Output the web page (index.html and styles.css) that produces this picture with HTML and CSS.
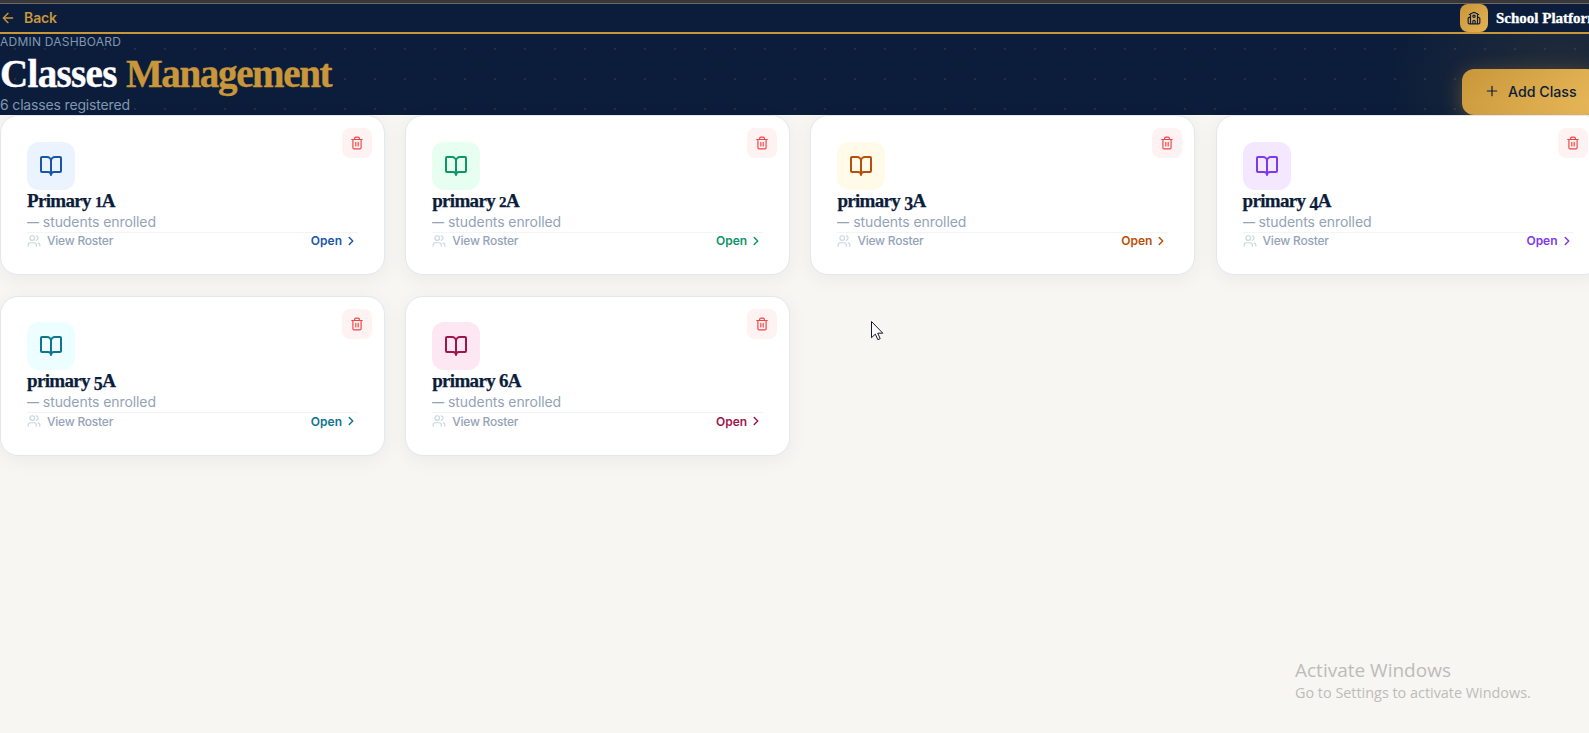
FILE: index.html
```html
<!DOCTYPE html>
<html lang="en">
<head>
<meta charset="utf-8">
<title>Classes Management</title>
<link rel="stylesheet" href="styles.css">
</head>
<body>
<svg class="sprite" aria-hidden="true">
  <symbol id="book" viewBox="0 0 24 24"><path d="M12 7v14M3 18a1 1 0 0 1-1-1V4a1 1 0 0 1 1-1h5a4 4 0 0 1 4 4 4 4 0 0 1 4-4h5a1 1 0 0 1 1 1v13a1 1 0 0 1-1 1h-6a3 3 0 0 0-3 3 3 3 0 0 0-3-3z"/></symbol>
  <symbol id="trash" viewBox="0 0 24 24"><path d="M3 6h18M19 6v14c0 1-1 2-2 2H7c-1 0-2-1-2-2V6M8 6V4c0-1 1-2 2-2h4c1 0 2 1 2 2v2M10 11v6M14 11v6"/></symbol>
  <symbol id="users" viewBox="0 0 24 24"><path d="M16 21v-2a4 4 0 0 0-4-4H6a4 4 0 0 0-4 4v2M22 21v-2a4 4 0 0 0-3-3.87M16 3.13a4 4 0 0 1 0 7.75"/><circle cx="9" cy="7" r="4"/></symbol>
  <symbol id="chevron" viewBox="0 0 24 24"><path d="m9 18 6-6-6-6"/></symbol>
</svg>

<div class="chrome-edge"></div>
<header class="topbar">
  <a class="back">
    <svg class="icon back-icon" viewBox="0 0 24 24"><path d="m12 19-7-7 7-7M19 12H5"/></svg>
    <span>Back</span>
  </a>
  <div class="brand">
    <span class="brand-logo"><svg class="icon" viewBox="0 0 24 24"><path d="M14 22v-4a2 2 0 1 0-4 0v4M18 10l3.45 1.82a1 1 0 0 1 .55.89V20a2 2 0 0 1-2 2H4a2 2 0 0 1-2-2v-7.29a1 1 0 0 1 .55-.89L6 10M18 5v17M4 6l7.1-3.55a2 2 0 0 1 1.8 0L20 6M6 5v17"/><circle cx="12" cy="9" r="2"/></svg></span>
    <span class="brand-name">School Platform</span>
  </div>
</header>

<section class="hero">
  <div class="hero-text">
    <div class="eyebrow">ADMIN DASHBOARD</div>
    <h1 class="title"><span>Classes</span> <span class="accent">Management</span></h1>
    <div class="subtitle">6 classes registered</div>
  </div>
  <button class="add"><svg class="icon" viewBox="0 0 24 24"><path d="M5 12h14M12 5v14"/></svg><span>Add Class</span></button>
</section>

<main class="grid">
  <article class="card blue">
    <button class="delete"><svg class="icon"><use href="#trash"/></svg></button>
    <div class="tile"><svg class="icon"><use href="#book"/></svg></div>
    <h2 class="name">Primary <span class="small-fig">1</span>A</h2>
    <div class="enrolled"><span class="dash">—</span> students enrolled</div>
    <div class="foot"><span class="roster"><svg class="icon"><use href="#users"/></svg>View Roster</span><span class="open">Open<svg class="icon"><use href="#chevron"/></svg></span></div>
  </article>
  <article class="card green">
    <button class="delete"><svg class="icon"><use href="#trash"/></svg></button>
    <div class="tile"><svg class="icon"><use href="#book"/></svg></div>
    <h2 class="name">primary <span class="small-fig">2</span>A</h2>
    <div class="enrolled"><span class="dash">—</span> students enrolled</div>
    <div class="foot"><span class="roster"><svg class="icon"><use href="#users"/></svg>View Roster</span><span class="open">Open<svg class="icon"><use href="#chevron"/></svg></span></div>
  </article>
  <article class="card amber">
    <button class="delete"><svg class="icon"><use href="#trash"/></svg></button>
    <div class="tile"><svg class="icon"><use href="#book"/></svg></div>
    <h2 class="name">primary <span class="low-fig">3</span>A</h2>
    <div class="enrolled"><span class="dash">—</span> students enrolled</div>
    <div class="foot"><span class="roster"><svg class="icon"><use href="#users"/></svg>View Roster</span><span class="open">Open<svg class="icon"><use href="#chevron"/></svg></span></div>
  </article>
  <article class="card violet">
    <button class="delete"><svg class="icon"><use href="#trash"/></svg></button>
    <div class="tile"><svg class="icon"><use href="#book"/></svg></div>
    <h2 class="name">primary <span class="low-fig">4</span>A</h2>
    <div class="enrolled"><span class="dash">—</span> students enrolled</div>
    <div class="foot"><span class="roster"><svg class="icon"><use href="#users"/></svg>View Roster</span><span class="open">Open<svg class="icon"><use href="#chevron"/></svg></span></div>
  </article>
  <article class="card teal">
    <button class="delete"><svg class="icon"><use href="#trash"/></svg></button>
    <div class="tile"><svg class="icon"><use href="#book"/></svg></div>
    <h2 class="name">primary <span class="low-fig">5</span>A</h2>
    <div class="enrolled"><span class="dash">—</span> students enrolled</div>
    <div class="foot"><span class="roster"><svg class="icon"><use href="#users"/></svg>View Roster</span><span class="open">Open<svg class="icon"><use href="#chevron"/></svg></span></div>
  </article>
  <article class="card rose">
    <button class="delete"><svg class="icon"><use href="#trash"/></svg></button>
    <div class="tile"><svg class="icon"><use href="#book"/></svg></div>
    <h2 class="name">primary 6A</h2>
    <div class="enrolled"><span class="dash">—</span> students enrolled</div>
    <div class="foot"><span class="roster"><svg class="icon"><use href="#users"/></svg>View Roster</span><span class="open">Open<svg class="icon"><use href="#chevron"/></svg></span></div>
  </article>
</main>

<svg class="cursor" viewBox="0 0 13 20"><path d="M.5.5v16.2l3.8-3.6 2.6 5.6 2.3-1.1-2.5-5.4h5.1z"/></svg>
<div class="watermark"><div class="wm-title">Activate Windows</div><div class="wm-text">Go to Settings to activate Windows.</div></div>
</body>
</html>
```

FILE: styles.css
```css
* { box-sizing: border-box; }
html, body { height: 100%; }
body {
  margin: 0;
  overflow: hidden;
  background: #f7f6f2;
  font-family: Inter, "Liberation Sans", sans-serif;
  color: #0b1d3a;
  white-space: nowrap;
}
h1, h2 { margin: 0; font-family: "Liberation Serif", serif; font-weight: 700; }
button { border: 0; padding: 0; font: inherit; color: inherit; }
.sprite { display: none; }
.icon {
  display: block;
  flex: none;
  width: 14px;
  height: 14px;
  fill: none;
  stroke: currentColor;
  stroke-width: 2;
  stroke-linecap: round;
  stroke-linejoin: round;
}

.chrome-edge { height: 4px; background: #383838; border-bottom: 1px solid #6a6a66; }
.topbar {
  display: flex;
  justify-content: space-between;
  width: 1599px;
  height: 30px;
  background: #0b1d3a;
  border-bottom: 2px solid #c9973a;
}
.back { display: flex; align-items: center; gap: 8px; color: #c9973a; font-size: 14px; font-weight: 600; letter-spacing: -.1px; line-height: 17px; padding-bottom: 1px; }
.back .icon { width: 16px; height: 16px; }
.brand { display: flex; align-items: center; gap: 8px; width: 139px; }
.brand-logo {
  display: grid;
  place-items: center;
  flex: none;
  width: 28px;
  height: 28px;
  border-radius: 8px;
  background: linear-gradient(135deg, #c9973a, #e3b356);
}
.brand-name { color: #fff; font: 700 15px "Liberation Serif", serif; -webkit-text-stroke: .3px; }

.hero {
  display: flex;
  justify-content: space-between;
  align-items: flex-end;
  width: 1599px;
  height: 81px;
  overflow: hidden;
  background:
    radial-gradient(ellipse 170px 150px at 1560px 50px, rgba(201, 151, 58, .13), transparent),
    radial-gradient(circle, #272e3d 1.4px, transparent 1.4px) 0 0 / 30px 30px,
    #0b1d3a;
}
.eyebrow { height: 17px; line-height: 16px; font-size: 12px; letter-spacing: .22px; color: #8397b2; }
.title { height: 44px; line-height: 46px; font-size: 39px; letter-spacing: -.65px; color: #fff; -webkit-text-stroke: .4px; }
.title .accent { letter-spacing: -1.35px; color: #c9973a; }
.subtitle { height: 20px; line-height: 19px; font-size: 14px; letter-spacing: -.16px; color: #8397b2; }
.add {
  display: flex;
  align-items: center;
  gap: 8px;
  width: 137px;
  height: 46px;
  padding: 0 0 2px 22px;
  border-radius: 12px;
  background: linear-gradient(135deg, #c9973a, #e8b95b);
  box-shadow: 0 4px 20px rgba(201, 151, 58, .35);
  font-size: 14.2px;
  font-weight: 500;
}
.add .icon { width: 16px; height: 16px; stroke-width: 1.8; }

.grid {
  display: grid;
  grid-template-columns: repeat(4, 385px);
  grid-auto-rows: 160px;
  gap: 20.6px 20.2px;
  width: 1600.6px;
}
.card {
  position: relative;
  padding: 25.6px 26px;
  background: #fff;
  border: 1px solid #e2e8f0;
  border-radius: 18px;
  box-shadow: 0 4px 20px rgba(11, 29, 58, .05);
}
.delete {
  position: absolute;
  top: 12px;
  right: 12px;
  display: grid;
  place-items: center;
  width: 30px;
  height: 30px;
  border-radius: 8px;
  background: #fef2f2;
  color: #ef4444;
}
.tile {
  display: grid;
  place-items: center;
  width: 48px;
  height: 48px;
  border-radius: 12px;
  background: var(--soft);
  color: var(--tone);
}
.tile .icon { width: 24px; height: 24px; }
.name { height: 23px; line-height: 22px; font-size: 19px; letter-spacing: -.68px; -webkit-text-stroke: .25px; }
.small-fig { font-size: 15px; }
.low-fig { position: relative; top: 3px; font-size: 18px; }
.enrolled { height: 19px; line-height: 18px; font-size: 14px; letter-spacing: -.08px; color: #94a3b8; }
.dash { display: inline-block; width: 12px; transform: scaleX(.86); transform-origin: 0 0; }
.foot {
  display: flex;
  justify-content: space-between;
  height: 18px;
  border-top: 1px solid #f1f5f9;
  font-size: 12px;
}
.roster, .open { display: flex; align-items: center; line-height: 15px; padding-bottom: 1px; }
.roster { gap: 6px; font-weight: 500; letter-spacing: -.22px; color: #94a3b8; }
.roster .icon { color: #cbd5e1; }
.open { gap: 2px; font-weight: 600; color: var(--tone); }
.open .icon { stroke-width: 2.5; }

.blue { --tone: #1a56a8; --soft: #ebf3ff; }
.green { --tone: #0d9668; --soft: #e6fff0; }
.amber { --tone: #b8500b; --soft: #fffbe8; }
.violet { --tone: #7c3aed; --soft: #f3e8ff; }
.teal { --tone: #0e7490; --soft: #ecfeff; }
.rose { --tone: #9d174d; --soft: #fde7f3; }

.cursor {
  position: absolute;
  left: 871px;
  top: 321px;
  width: 13px;
  height: 20px;
  fill: #fff;
  stroke: #14182a;
}
.watermark {
  position: absolute;
  left: 1295px;
  top: 656px;
  font-family: "Open Sans", sans-serif;
  color: #bdbcb9;
}
.wm-title { height: 26px; line-height: 28px; font-size: 19px; }
.wm-text { line-height: 21px; font-size: 14.4px; }
```
